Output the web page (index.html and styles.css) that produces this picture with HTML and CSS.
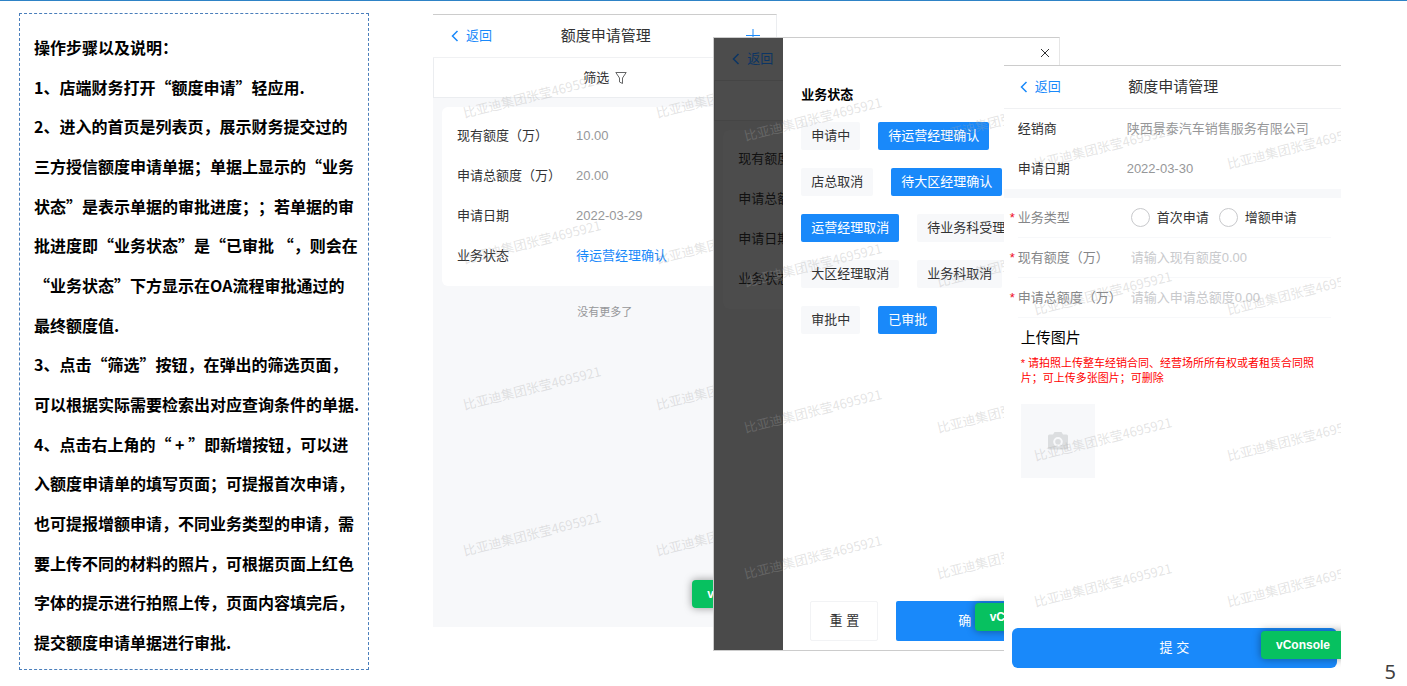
FILE: index.html
```html
<!DOCTYPE html>
<html lang="zh-CN">
<head>
<meta charset="utf-8">
<title>额度申请管理</title>
<link rel="stylesheet" href="styles.css">
</head>
<body>
<main class="slide">
  <section class="note">
    <p><span>操作步骤以及说明：</span></p>
    <p><span>1、店端财务打开“额度申请”轻应用.</span></p>
    <p><span>2、进入的首页是列表页，展示财务提交过的</span><span>三方授信额度申请单据；单据上显示的“业务</span><span>状态”是表示单据的审批进度；；若单据的审</span><span>批进度即“业务状态”是“已审批 “，则会在</span><span>“业务状态”下方显示在OA流程审批通过的</span><span>最终额度值.</span></p>
    <p><span>3、点击“筛选”按钮，在弹出的筛选页面，</span><span>可以根据实际需要检索出对应查询条件的单据.</span></p>
    <p><span>4、点击右上角的“ + ”即新增按钮，可以进</span><span>入额度申请单的填写页面；可提报首次申请，</span><span>也可提报增额申请，不同业务类型的申请，需</span><span>要上传不同的材料的照片，可根据页面上红色</span><span>字体的提示进行拍照上传，页面内容填完后，</span><span>提交额度申请单据进行审批.</span></p>
  </section>

  <div class="stage">
    <section class="phone phone-list">
      <header class="nav">
        <a class="back" href="#"><svg width="8" height="12" viewBox="0 0 8 12"><path d="M6.500 1 L1.500 6 L6.500 11"/></svg>返回</a>
        <h2>额度申请管理</h2>
        <button class="add" type="button" aria-label="新增"><svg width="14" height="14" viewBox="0 0 14 14"><path d="M7 0V14M0 6.500H14"/></svg></button>
      </header>
      <button class="filter" type="button">筛选<svg width="12" height="14" viewBox="0 0 12 14"><path d="M.8 1.500H11.200L7.500 7V12.500L4.500 11V7Z"/></svg></button>
      <div class="list">
        <dl class="card">
          <div><dt>现有额度（万）</dt><dd>10.00</dd></div>
          <div><dt>申请总额度（万）</dt><dd>20.00</dd></div>
          <div><dt>申请日期</dt><dd>2022-03-29</dd></div>
          <div><dt>业务状态</dt><dd class="status">待运营经理确认</dd></div>
        </dl>
        <p class="end">没有更多了</p>
      </div>
      <div class="marks" aria-hidden="true"><span>比亚迪集团张莹4695921</span><span>比亚迪集团张莹4695921</span><span>比亚迪集团张莹4695921</span><span>比亚迪集团张莹4695921</span><span>比亚迪集团张莹4695921</span><span>比亚迪集团张莹4695921</span><span>比亚迪集团张莹4695921</span><span>比亚迪集团张莹4695921</span></div>
      <button class="vconsole" type="button">vConsole</button>
    </section>

    <section class="phone phone-filter">
      <div class="dimmed">
        <header class="nav">
          <a class="back" href="#"><svg width="8" height="12" viewBox="0 0 8 12"><path d="M6.500 1 L1.500 6 L6.500 11"/></svg>返回</a>
        </header>
        <div class="filter"></div>
        <div class="list">
          <dl class="card">
            <div><dt>现有额度</dt></div>
            <div><dt>申请总额</dt></div>
            <div><dt>申请日期</dt></div>
            <div><dt>业务状态</dt></div>
          </dl>
        </div>
      </div>
      <div class="drawer">
        <button class="close" type="button" aria-label="关闭"><svg width="10" height="10" viewBox="0 0 10 10"><path d="M1 1L9 9M9 1L1 9"/></svg></button>
        <h3>业务状态</h3>
        <div class="tags">
          <button type="button">申请中</button>
          <button type="button" class="on">待运营经理确认</button>
          <button type="button">店总取消</button>
          <button type="button" class="on">待大区经理确认</button>
          <button type="button" class="on">运营经理取消</button>
          <button type="button">待业务科受理</button>
          <button type="button">大区经理取消</button>
          <button type="button">业务科取消</button>
          <button type="button">审批中</button>
          <button type="button" class="on">已审批</button>
        </div>
        <footer class="actions">
          <button type="button" class="reset">重 置</button>
          <button type="button" class="confirm">确 认</button>
        </footer>
      </div>
      <div class="marks" aria-hidden="true"><span>比亚迪集团张莹4695921</span><span>比亚迪集团张莹4695921</span><span>比亚迪集团张莹4695921</span><span>比亚迪集团张莹4695921</span><span>比亚迪集团张莹4695921</span><span>比亚迪集团张莹4695921</span><span>比亚迪集团张莹4695921</span><span>比亚迪集团张莹4695921</span></div>
      <button class="vconsole" type="button">vConsole</button>
    </section>

    <form class="phone phone-form">
      <header class="nav">
        <a class="back" href="#"><svg width="8" height="12" viewBox="0 0 8 12"><path d="M6.500 1 L1.500 6 L6.500 11"/></svg>返回</a>
        <h2>额度申请管理</h2>
      </header>
      <dl class="info">
        <div><dt>经销商</dt><dd>陕西景泰汽车销售服务有限公司</dd></div>
        <div><dt>申请日期</dt><dd>2022-03-30</dd></div>
      </dl>
      <div class="fields">
        <div class="field" role="radiogroup" aria-labelledby="kind">
          <span class="name" id="kind">业务类型</span>
          <label class="radio"><input type="radio" name="kind">首次申请</label>
          <label class="radio"><input type="radio" name="kind">增额申请</label>
        </div>
        <div class="field"><label class="name" for="current">现有额度（万）</label><input id="current" type="text" placeholder="请输入现有额度0.00"></div>
        <div class="field"><label class="name" for="total">申请总额度（万）</label><input id="total" type="text" placeholder="请输入申请总额度0.00"></div>
      </div>
      <div class="upload">
        <h3>上传图片</h3>
        <p>* 请拍照上传整车经销合同、经营场所所有权或者租赁合同照片；可上传多张图片；可删除</p>
        <button type="button" aria-label="上传图片"><svg width="20" height="18" viewBox="0 0 20 18"><path fill-rule="evenodd" d="M6.500 0H13.500L15 2.500H18.500Q20 2.500 20 4V16Q20 17.500 18.500 17.500H1.500Q0 17.500 0 16V4Q0 2.500 1.500 2.500H5ZM10 5A4.800 4.800 0 1 0 10 14.600A4.800 4.800 0 1 0 10 5ZM10 7A2.800 2.800 0 1 1 10 12.600A2.800 2.800 0 1 1 10 7Z"/></svg></button>
      </div>
      <button class="submit" type="submit">提 交</button>
      <div class="marks" aria-hidden="true"><span>比亚迪集团张莹4695921</span><span>比亚迪集团张莹4695921</span><span>比亚迪集团张莹4695921</span><span>比亚迪集团张莹4695921</span><span>比亚迪集团张莹4695921</span><span>比亚迪集团张莹4695921</span><span>比亚迪集团张莹4695921</span><span>比亚迪集团张莹4695921</span></div>
      <button class="vconsole" type="button">vConsole</button>
    </form>
  </div>
  <span class="page-number">5</span>
</main>
</body>
</html>
```
FILE: styles.css
```css
* { box-sizing: border-box; }

body, h2, h3, p, dl, dd { margin: 0; }

body {
  background: #fff;
  color: #323233;
  font: 13px/20px "Liberation Sans", "Noto Sans CJK SC", sans-serif;
}

button, input {
  margin: 0;
  padding: 0;
  border: 0;
  background: none;
  color: inherit;
  font: inherit;
}

a { color: inherit; text-decoration: none; }

svg { fill: none; stroke: currentColor; flex: none; }

.slide {
  position: relative;
  display: flex;
  min-height: 100vh;
  padding-left: 19px;
  border-top: 1px solid #2e83c6;
}

/* instructions */
.note {
  flex: none;
  display: grid;
  grid-auto-rows: 1fr;
  align-items: center;
  width: 350px;
  margin: 12px 0 16px;
  padding: 13px 0 7px 14px;
  border: 1px dashed #4a7ebb;
  color: #000;
  font: bold 16px/24px "Noto Sans CJK SC", sans-serif;
  text-spacing-trim: space-all;
  white-space: nowrap;
}

.note p { display: contents; }

/* overlapping screens */
.stage {
  flex: 1;
  display: flex;
  min-width: 0;
  padding: 13px 66px 0 64px;
}

.phone {
  position: relative;
  display: flex;
  flex-direction: column;
  min-width: 0;
  overflow: hidden;
  border-top: 1px solid #ccc;
  background: #fff;
}

.phone-list {
  flex: 344 1 0;
  margin-bottom: 59px;
  border-right: 1px solid #ebedf0;
}

.phone-filter {
  flex: 345 1 0;
  flex-direction: row;
  margin: 23px 0 35px -64px;
  border: 1px solid #ccc;
  border-right-color: #e6e6e6;
}

.phone-form {
  flex: 338 1 0;
  margin: 51px 0 9px -56px;
}

.nav {
  display: grid;
  grid-template-columns: 1fr auto 1fr;
  align-items: center;
  height: 43px;
  padding: 0 16px 0 18px;
  border-bottom: 1px solid #f0f1f3;
}

.phone-form .nav { padding: 0 14px 0 16px; }

.nav h2 { font-size: 15px; font-weight: 400; }

.back {
  display: flex;
  align-items: center;
  gap: 7px;
  color: #1989fa;
  white-space: nowrap;
}

.back svg { stroke-width: 1.5; }

.add {
  display: flex;
  justify-self: end;
  color: #1989fa;
}

.filter {
  display: flex;
  align-items: center;
  justify-content: center;
  gap: 6px;
  height: 40px;
  border: 1px solid #ebedf0;
  border-width: 0 0 1px 1px;
}

.filter svg { color: #646566; }

.list {
  flex: 1;
  padding: 9px;
  background: #f7f8fa;
}

.card {
  padding: 9px 15px 10px;
  border-radius: 6px;
  background: #fff;
}

.card div, .info div {
  display: flex;
  align-items: center;
  height: 40px;
  white-space: nowrap;
}

.card dt { flex: none; width: 119px; }
.card dd, .info dd { color: #969799; }
.card .status { color: #1989fa; }

.end {
  padding-top: 16px;
  color: #969799;
  font-size: 11px;
  text-align: center;
}

/* filter drawer */
.dimmed {
  flex: none;
  display: flex;
  flex-direction: column;
  width: 69px;
  overflow: hidden;
  background: #4c4c4c;
  color: #111;
}

.dimmed .nav, .dimmed .filter { border-color: #454545; }
.dimmed .back { color: #0b3564; }
.dimmed .list { padding-right: 0; background: #4a4a4a; }
.dimmed .card { border-radius: 6px 0 0 6px; background: #4c4c4c; }

.drawer {
  flex: 1;
  display: flex;
  flex-direction: column;
  min-width: 0;
  padding: 10px 9px 9px 18px;
}

.close { display: flex; align-self: flex-end; }

.drawer h3 {
  margin: 27px 0 17px;
  color: #000;
  font-size: 13px;
}

.tags {
  display: flex;
  flex-wrap: wrap;
  gap: 18px;
}

.tags button {
  height: 28px;
  padding: 0 10px;
  border-radius: 2px;
  background: #f7f8fa;
  white-space: nowrap;
}

.tags .on { background: #1989fa; color: #fff; }

.actions {
  display: flex;
  gap: 18px;
  margin-top: auto;
  padding-left: 9px;
}

.actions button { height: 40px; border-radius: 2px; }
.actions .reset { width: 68px; border: 1px solid #f2f3f5; }
.actions .confirm { flex: 1; background: #1989fa; color: #fff; }

/* application form */
.info { padding-left: 14px; }
.info dt { flex: none; width: 109px; }

.fields {
  padding: 0 10px 0 14px;
  border-top: 9px solid #f7f8fa;
}

.field {
  position: relative;
  display: flex;
  align-items: center;
  height: 40px;
  border-bottom: 1px solid #f7f8fa;
}

.field::before {
  content: "*";
  position: absolute;
  left: -8px;
  color: #ee0a24;
}

.field .name {
  flex: none;
  width: 113px;
  color: #858688;
}

.field input[type="text"] { flex: 1; min-width: 0; }
.field input::placeholder { color: #c8c9cc; }

.radio {
  display: flex;
  align-items: center;
  gap: 7px;
  margin-right: 10px;
}

.radio input {
  appearance: none;
  width: 19px;
  height: 19px;
  border: 1px solid #c8c9cc;
  border-radius: 50%;
}

.upload { padding: 10px 17px; }

.upload h3 {
  margin-bottom: 8px;
  color: #000;
  font-size: 15px;
  font-weight: 400;
}

.upload p {
  margin-bottom: 18px;
  color: #f00;
  font-size: 11px;
  line-height: 15px;
}

.upload button {
  display: flex;
  align-items: center;
  justify-content: center;
  width: 74px;
  height: 74px;
  background: #f7f8fa;
  color: #dcdee0;
}

.upload svg { fill: currentColor; stroke: none; }

.submit {
  height: 40px;
  margin: auto 4px 9px 8px;
  border-radius: 6px;
  background: #1989fa;
  color: #fff;
}

/* watermark laid over each screen */
.marks {
  position: absolute;
  inset: -41px 0 0 32px;
  display: grid;
  grid-template-columns: 193px 193px;
  grid-auto-rows: 146px;
  align-items: end;
  color: rgba(165, 165, 165, .3);
  font: 13px/14px "Noto Sans CJK SC", sans-serif;
  white-space: nowrap;
  pointer-events: none;
}

.marks span {
  transform: rotate(-14deg);
  transform-origin: left bottom;
}

.vconsole {
  position: absolute;
  right: 0;
  bottom: 19px;
  height: 28px;
  padding: 0 15px;
  border-radius: 4px;
  background: #07c160;
  box-shadow: 0 0 8px rgba(0, 0, 0, .4);
  color: #fff;
  font-size: 12px;
  font-weight: 700;
}

.phone-form .vconsole { right: -4px; bottom: 18px; }

.page-number {
  position: absolute;
  right: 11px;
  bottom: 2px;
  color: #404040;
  font: 20px/24px "Noto Sans", sans-serif;
}
```
